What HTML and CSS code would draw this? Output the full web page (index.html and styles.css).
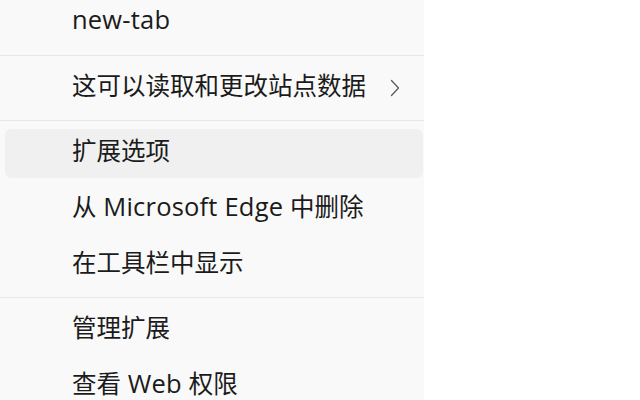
FILE: index.html
```html
<!DOCTYPE html>
<html lang="zh-CN">
<head>
<meta charset="utf-8">
<link rel="stylesheet" href="styles.css">
</head>
<body>
<div class="menu">
  <div class="header"><span class="en">new-tab</span></div>
  <div class="sep"></div>
  <div class="item has-sub">
    <span class="label">这可以读取和更改站点数据</span>
    <svg class="chev" width="12" height="18" viewBox="0 0 12 18"><path d="M2.5 1.5 L9.5 9 L2.5 16.5" fill="none" stroke="#5c5c5c" stroke-width="1.3" stroke-linecap="round" stroke-linejoin="round"/></svg>
  </div>
  <div class="sep"></div>
  <div class="item hover"><span class="label">扩展选项</span></div>
  <div class="item"><span class="label">从<span class="en"> Microsoft Edge </span>中删除</span></div>
  <div class="item"><span class="label">在工具栏中显示</span></div>
  <div class="sep"></div>
  <div class="item"><span class="label">管理扩展</span></div>
  <div class="item"><span class="label">查看<span class="en"> Web </span>权限</span></div>
</div>
</body>
</html>
```
FILE: styles.css
```css
html, body {
  margin: 0;
  padding: 0;
  background: #ffffff;
  height: 400px;
  overflow: hidden;
}
.menu {
  width: 424px;
  height: 400px;
  background: #f9f9f9;
  display: flex;
  flex-direction: column;
  font-family: "Open Sans", "Noto Sans CJK SC", sans-serif;
  font-size: 24.5px;
  color: #1b1b1b;
}
.en {
  font-size: 25.5px;
  letter-spacing: 0.2px;
}
.header {
  height: 55px;
  flex: none;
  display: flex;
  align-items: center;
  padding-left: 72px;
  box-sizing: border-box;
  padding-bottom: 16px;
  line-height: 1;
}
.sep {
  flex: none;
  height: 1px;
  background: #e6e6e6;
  margin: 0 0 4px 0;
}
.item + .sep {
  margin-top: 4px;
}
.item {
  flex: none;
  height: 49px;
  margin: 3.5px 1px 3.5px 5px;
  padding-left: 67px;
  padding-right: 22px;
  padding-bottom: 4px;
  border-radius: 6px;
  display: flex;
  align-items: center;
  box-sizing: border-box;
}
.item .label {
  flex: 1;
  line-height: 1;
  white-space: nowrap;
}
.item.hover {
  background: #f0f0f0;
}
.chev {
  flex: none;
  margin-top: 4px;
}
```
